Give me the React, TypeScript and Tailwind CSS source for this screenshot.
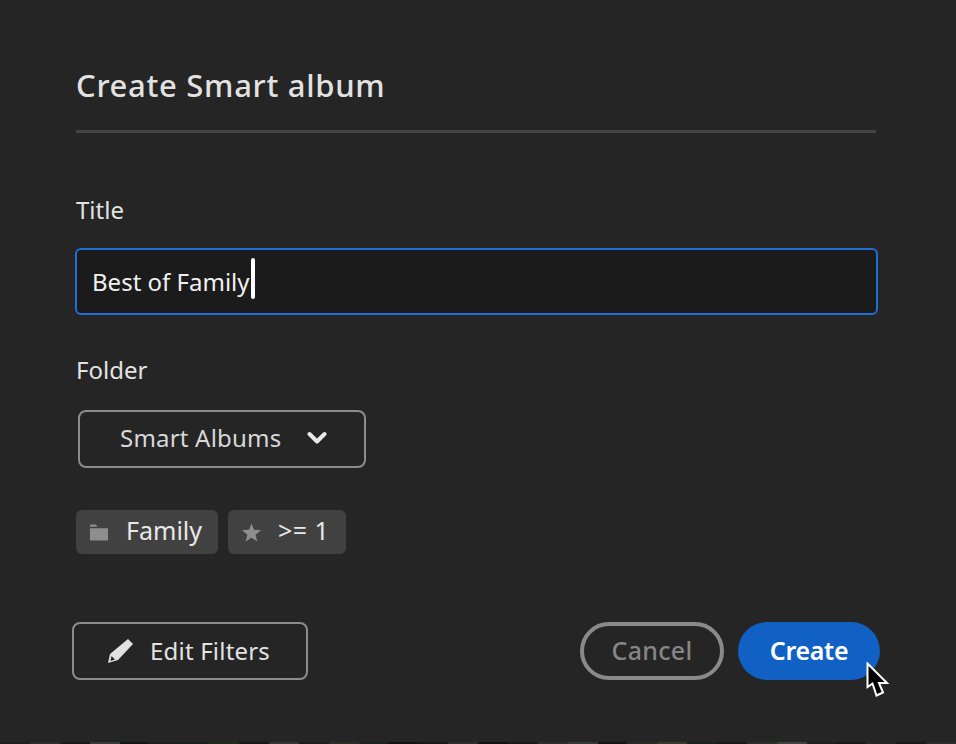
const font = { fontFamily: '"Noto Sans", Lato, sans-serif' }

function PhotoStrip() {
  const cols = ['#1d1f1c', '#2f302d', '#1a1a18', '#3a3a38', '#141613', '#1e1f1d', '#18221a', '#1f2a1c', '#161816', '#353533', '#1b1d1a', '#2c2f28', '#1a241c', '#121412', '#171917', '#2e302c', '#111311', '#1a1c1b', '#2a2f2d', '#33393a', '#141716', '#262b24', '#38392f', '#1b211c', '#161a18', '#2d2f2e', '#414140', '#1c2020', '#151a18', '#24282a', '#181c1a', '#2b2d2a']
  return (
    <div className="flex h-[2px] w-full">
      {cols.map((c, i) => (
        <div key={i} className="flex-1" style={{ backgroundColor: c }} />
      ))}
    </div>
  )
}

export default function App() {
  return (
    <div style={font} className="relative flex h-[744px] w-[956px] flex-col overflow-hidden bg-[#252525]">
      <div className="flex flex-1 flex-col pl-[76px] pr-[80px]">
        <h1 className="mt-[65px] h-[40px] text-[31px] leading-[40px] font-medium tracking-[0.7px] text-[#e2e2e2]">Create Smart album</h1>
        <div className="mt-[25px] h-[3px] w-[800px] bg-[#444444]" />

        <label className="mt-[63px] h-[28px] text-[24px] leading-[28px] text-[#e2e2e2]">Title</label>
        <div className="mt-[24px] -ml-px flex h-[67px] w-[803px] items-center rounded-[6px] border-2 border-[#1f6fd6] bg-[#1b1b1b] pl-[15px]">
          <span className="text-[24px] leading-[30px] text-[#f0f0f0]">Best of Family</span>
          <span className="mb-[7px] ml-px h-[41px] w-[4px] rounded-sm bg-white" />
        </div>

        <label className="mt-[41px] h-[28px] text-[24px] leading-[28px] text-[#e2e2e2]">Folder</label>
        <div className="mt-[26px] ml-[2px] flex h-[58px] w-[288px] items-center rounded-[8px] border-2 border-[#8c8c8c] pl-[40px]">
          <span className="mb-[2px] text-[24px] leading-[30px] tracking-[0.2px] text-[#d8d8d8]">Smart Albums</span>
          <svg viewBox="0 0 20 14" className="mb-[2px] ml-[26px] h-[14px] w-[20px]" fill="none" stroke="#e8e8e8" strokeWidth="4" strokeLinecap="round" strokeLinejoin="round">
            <path d="M2.5 3 L10 10.5 L17.5 3" />
          </svg>
        </div>

        <div className="mt-[42px] flex gap-[10px]">
          <div className="flex h-[44px] w-[142px] items-center rounded-[6px] bg-[#414141] pl-[14px]">
            <svg viewBox="0 0 20 17" className="h-[17px] w-[19px]" fill="#8e8e8e">
              <path d="M0 1 Q0 0 1 0 H6 L8 2.5 H0 Z M0 4 H19 V16 Q19 17 18 17 H1 Q0 17 0 16 Z" />
            </svg>
            <span className="mb-[5px] ml-[17px] text-[25px] leading-[30px] text-[#e8e8e8]">Family</span>
          </div>
          <div className="flex h-[44px] w-[118px] items-center rounded-[6px] bg-[#414141] pl-[14px]">
            <svg viewBox="0 0 20 19" className="h-[19px] w-[19px]" fill="#8e8e8e">
              <path d="M10 0 L12.6 6.6 L20 7.2 L14.3 11.8 L16.2 19 L10 15 L3.8 19 L5.7 11.8 L0 7.2 L7.4 6.6 Z" />
            </svg>
            <span className="mb-[5px] ml-[17px] text-[25px] leading-[30px] tracking-[0.5px] text-[#e8e8e8]">&gt;= 1</span>
          </div>
        </div>

        <div className="mt-[68px] -ml-[4px] flex w-[808px] items-center justify-between">
          <button className="flex h-[58px] w-[236px] items-center rounded-[8px] border-2 border-[#8c8c8c] pl-[33px]">
            <svg viewBox="0 0 26 26" className="h-[26px] w-[26px]" fill="#e2e2e2">
              <path d="M21 1 L26 6 L11 22 L1 25 L3 16 Z" />
              <path d="M4.5 18 L8 21.5 L3.5 23 Z" fill="#252525" />
            </svg>
            <span className="ml-[17px] text-[24px] leading-[30px] tracking-[0.2px] text-[#e2e2e2]">Edit Filters</span>
          </button>
          <div className="flex gap-[14px]">
            <button className="h-[58px] w-[144px] rounded-full border-[4px] border-[#8a8a8a] text-[25px] font-medium tracking-[0.3px] text-[#868686]">Cancel</button>
            <button className="h-[58px] w-[142px] rounded-full bg-[#1161c4] text-[25px] font-semibold tracking-[-0.3px] text-white">Create</button>
          </div>
        </div>
      </div>
      <PhotoStrip />

      <svg viewBox="0 0 24 38" className="absolute top-[662px] left-[866px] h-[38px] w-[24px]">
        <path d="M1.5 1.5 V25 L6.5 21.5 L10.5 33.5 L17 30.5 L13 21 H21 Z" fill="#000" stroke="#fff" strokeWidth="2" strokeLinejoin="miter" />
      </svg>
    </div>
  )
}
